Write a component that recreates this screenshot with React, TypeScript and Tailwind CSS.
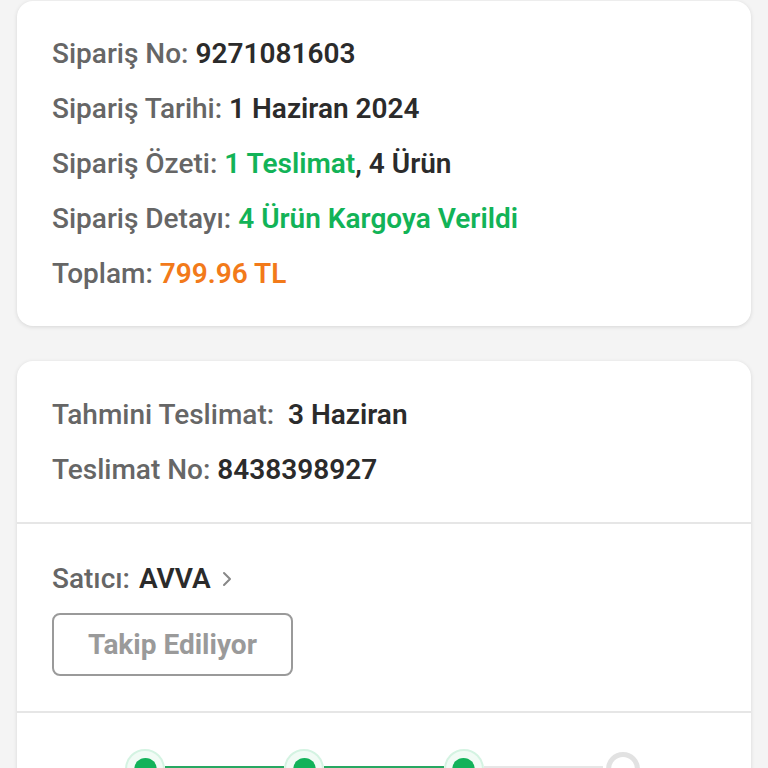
import { ChevronRight } from "lucide-react";

function Row({ label, children }: { label: string; children: React.ReactNode }) {
  return (
    <div className="leading-[55px]">
      <span className="font-medium text-[#666666]">{label}</span> {children}
    </div>
  );
}

function Step({ done }: { done: boolean }) {
  return (
    <div className="flex h-[40px] w-[40px] shrink-0 items-center justify-center">
      {done ? (
        <div className="flex h-[40px] w-[40px] items-center justify-center rounded-full border-2 border-[#d4f3e2] bg-[#f1fbf5]">
          <div className="h-[23px] w-[23px] rounded-full bg-[#13b25a]" />
        </div>
      ) : (
        <div className="h-[34px] w-[34px] rounded-full border-[5px] border-[#e2e2e2] bg-white" />
      )}
    </div>
  );
}

export default function App() {
  const steps = [true, true, true, false];
  return (
    <div className="min-h-screen bg-[#f4f4f4] px-[17px] pt-px pb-10 font-['Roboto',sans-serif] text-[28px]">
      <div className="rounded-2xl bg-white px-[35px] pt-[25px] pb-[25px] shadow-[0_1px_4px_rgba(0,0,0,0.12)]">
        <Row label="Sipariş No:">
          <span className="font-semibold text-[#2b2b2b]">9271081603</span>
        </Row>
        <Row label="Sipariş Tarihi:">
          <span className="font-semibold text-[#2b2b2b]">1 Haziran 2024</span>
        </Row>
        <Row label="Sipariş Özeti:">
          <span className="font-semibold text-[#12b357]">1 Teslimat</span>
          <span className="font-semibold text-[#2b2b2b]">, 4 Ürün</span>
        </Row>
        <Row label="Sipariş Detayı:">
          <span className="font-semibold text-[#12b357]">4 Ürün Kargoya Verildi</span>
        </Row>
        <Row label="Toplam:">
          <span className="font-semibold text-[#f27a1a]">799.96 TL</span>
        </Row>
      </div>

      <div className="mt-[35px] rounded-2xl bg-white shadow-[0_1px_4px_rgba(0,0,0,0.12)]">
        <div className="px-[35px] pt-[26px] pb-[25px]">
          <Row label="Tahmini Teslimat:">
            <span className="font-semibold text-[#2b2b2b]">&nbsp;3 Haziran</span>
          </Row>
          <Row label="Teslimat No:">
            <span className="font-semibold text-[#2b2b2b]">8438398927</span>
          </Row>
        </div>
        <div className="border-t-2 border-[#e6e6e6] px-[35px] pt-[27px] pb-[35px]">
          <div className="flex items-center leading-[55px]">
            <span className="font-medium text-[#666666]">Satıcı:</span>
            <span className="ml-[9px] font-semibold text-[#2b2b2b]">AVVA</span>
            <ChevronRight className="ml-[4px] h-[24px] w-[24px] text-[#888888]" strokeWidth={2} />
          </div>
          <button className="mt-[7px] flex h-[63px] w-[241px] items-center justify-center rounded-lg border-2 border-[#9a9a9a] bg-white font-bold text-[#9a9a9a]">
            Takip Ediliyor
          </button>
        </div>
        <div className="border-t-2 border-[#e6e6e6] px-[108px] pt-[36px] pb-[60px]">
          <div className="flex items-center">
            {steps.map((done, i) => (
              <div key={i} className={i < steps.length - 1 ? "flex flex-1 items-center" : "flex items-center"}>
                <Step done={done} />
                {i < steps.length - 1 && (
                  <div className={`h-[6px] flex-1 ${steps[i + 1] ? "bg-[#28a862]" : "bg-[#e6e6e6]"}`} />
                )}
              </div>
            ))}
          </div>
        </div>
      </div>
    </div>
  );
}
